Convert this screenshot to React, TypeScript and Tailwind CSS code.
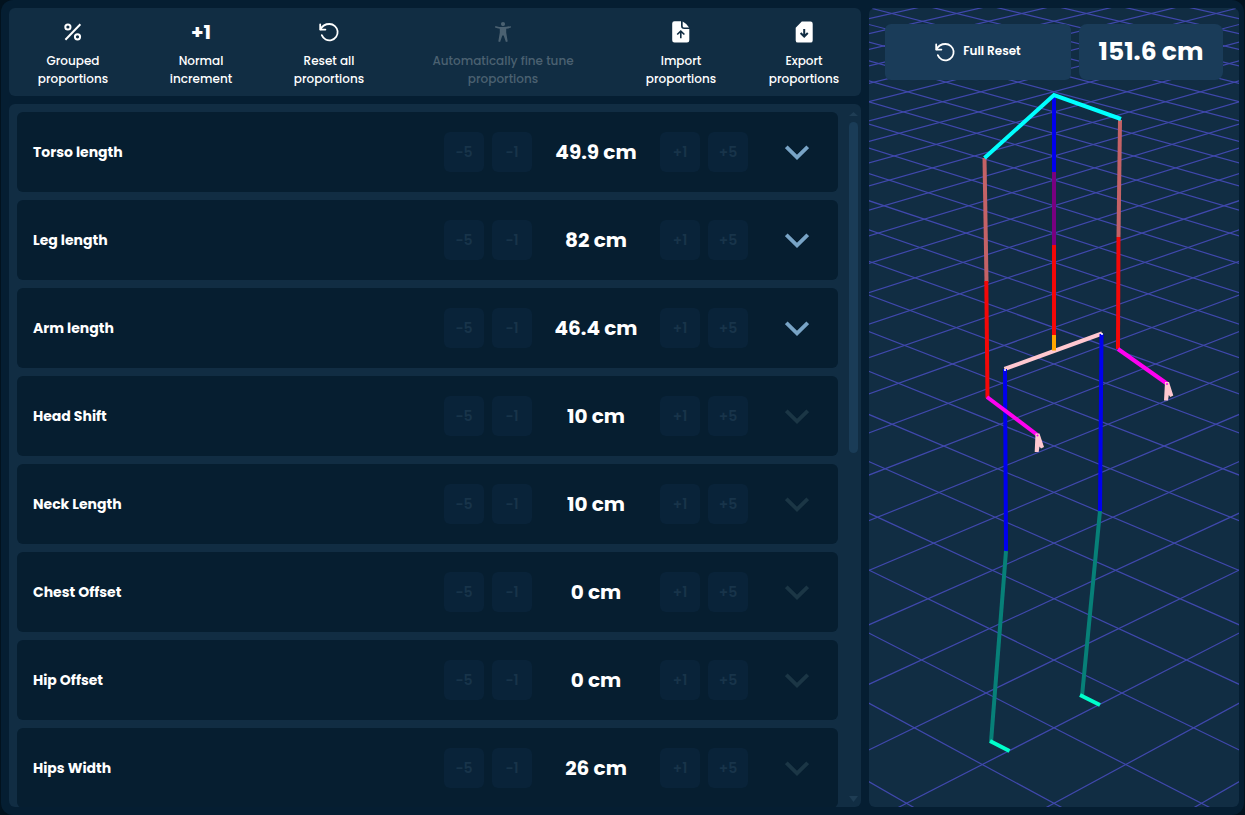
import React from 'react';

type Point = [number, number];

const ROWS = [
  { name: 'Torso length', value: '49.9 cm', group: true },
  { name: 'Leg length', value: '82 cm', group: true },
  { name: 'Arm length', value: '46.4 cm', group: true },
  { name: 'Head Shift', value: '10 cm', group: false },
  { name: 'Neck Length', value: '10 cm', group: false },
  { name: 'Chest Offset', value: '0 cm', group: false },
  { name: 'Hip Offset', value: '0 cm', group: false },
  { name: 'Hips Width', value: '26 cm', group: false },
];

function PercentIcon() {
  return (
    <svg width="18" height="18" viewBox="0 0 18 18" fill="none" stroke="currentColor" strokeWidth="2">
      <circle cx="3.900" cy="4" r="2.600" />
      <circle cx="13.500" cy="13.800" r="2.600" />
      <path d="M16.400 1.200 1.400 16.800" />
    </svg>
  );
}

function ResetIcon() {
  return (
    <svg width="20" height="20" viewBox="0 0 20 20" fill="none" stroke="currentColor" strokeWidth="1.800" strokeLinecap="round" strokeLinejoin="round">
      <path d="M1.200 2.400v5.200h5.200" />
      <path d="M1.600 7.300C3.200 3.900 6.400 2 10.500 2a8.200 8.200 0 1 1-7.700 11.200" />
    </svg>
  );
}

function HumanIcon() {
  return (
    <svg width="16" height="20" viewBox="0 0 16 20" fill="currentColor">
      <circle cx="8" cy="2.100" r="2.100" />
      <path d="M.4 3.900c5 1.600 10.200 1.600 15.200 0l.4 1.700c-1.600.6-3.200 1-4.800 1.200v3.700l1.500 9.100-1.800.4L8.700 13.600H7.300L5.100 20l-1.800-.4 1.500-9.100V6.800C3.200 6.600 1.600 6.200 0 5.600z" />
    </svg>
  );
}

function ImportIcon() {
  return (
    <svg width="18" height="22" viewBox="0 0 18 22">
      <path fill="currentColor" d="M2.500 .3H9v4.500A3.200 3.200 0 0 0 12.200 8H17.300v11.300a2.300 2.300 0 0 1-2.300 2.300H2.500A2.300 2.300 0 0 1 .2 19.300V2.600A2.300 2.300 0 0 1 2.500 .3z" />
      <path fill="currentColor" d="M10.700 .5q3.900 2 6.300 6H12.300a1.600 1.600 0 0 1-1.600-1.600z" />
      <path fill="none" stroke="#112d43" strokeWidth="1.600" d="M8.800 17.300v-7M5.200 13.500l3.600-3.400 3.600 3.400" />
    </svg>
  );
}

function ExportIcon() {
  return (
    <svg width="18" height="22" viewBox="0 0 18 22">
      <path fill="currentColor" d="M6.800 .6H15.500a2.200 2.200 0 0 1 2.200 2.200v16.600a2.200 2.200 0 0 1-2.200 2.200H2.900a2.200 2.200 0 0 1-2.200-2.200V6.700z" />
      <path fill="none" stroke="#112d43" strokeWidth="2" d="M9.200 8v7.500M5.600 12l3.600 3.500 3.600-3.500" />
    </svg>
  );
}

function Tool({ icon, lines, width, dim }: { icon: React.ReactNode; lines: [string, string]; width: string; dim?: boolean }) {
  return (
    <div className={`${width} ${dim ? 'text-[#4b6171]' : 'text-white'} flex flex-col items-center pt-3`}>
      <div className="flex h-6 items-center justify-center">{icon}</div>
      <div className="mt-2 text-center text-[12px] leading-[18px] font-medium">
        <div>{lines[0]}</div>
        <div>{lines[1]}</div>
      </div>
    </div>
  );
}

function Step({ label }: { label: string }) {
  return (
    <div className="flex h-10 w-10 items-center justify-center rounded-md bg-[#092339] text-[14px] font-semibold text-[#18344a]">
      {label}
    </div>
  );
}

function Row({ name, value, group }: { name: string; value: string; group: boolean }) {
  return (
    <div className="flex h-20 shrink-0 items-center rounded-md bg-[#061e30]">
      <div className="w-[427px] pl-4 text-[14px] font-bold text-white">{name}</div>
      <div className="flex gap-2">
        <Step label="-5" />
        <Step label="-1" />
      </div>
      <div className="w-32 text-center text-[20px] font-bold whitespace-nowrap text-white">{value}</div>
      <div className="flex gap-2">
        <Step label="+1" />
        <Step label="+5" />
      </div>
      <svg className={`ml-[37px] ${group ? 'text-[#78a4c6]' : 'text-[#1b3645]'}`} width="24" height="16" viewBox="0 0 24 16" fill="none" stroke="currentColor" strokeWidth="3.800">
        <path d="M1.300 2.800 12 13.300 22.700 2.800" />
      </svg>
    </div>
  );
}

/* Ground plane in one-point perspective; depth grows towards the horizon. */
function project(depth: number, lateral: number): Point {
  const s = 1 + 0.05651 * depth;
  return [185 + (147.5 * lateral) / s, -615.7 + 1411 / s];
}

const GRID = Array.from({ length: 36 }, (_, n) => n - 5).flatMap((i) =>
  [1, -1].map((side) => {
    const a = project(-2, side * (i + 2));
    const b = project(27, side * (i - 27));
    return { key: `${i}:${side}`, a, b };
  }),
);

const BONES: { c: string; p: string }[] = [
  { c: '#0000ee', p: 'M185 88V165' },
  { c: '#780080', p: 'M185 164V238' },
  { c: '#f40808', p: 'M185 237V328' },
  { c: '#c46266', p: 'M115.500 150L117.500 274' },
  { c: '#c46266', p: 'M251 112L249.500 229' },
  { c: '#f40808', p: 'M117.300 273L118.500 390' },
  { c: '#f40808', p: 'M249.500 229L249 341' },
  { c: '#00ffff', p: 'M115.500 150L185 87L252 111' },
  { c: '#ffc8d0', p: 'M135.500 361L233 325.500' },
  { c: '#ffa500', p: 'M185 327V342.500' },
  { c: '#0000ee', p: 'M136 361L137 543' },
  { c: '#0000ee', p: 'M232.500 326L231 504' },
  { c: '#078078', p: 'M137 543L122 734' },
  { c: '#078078', p: 'M231 503L213 688' },
  { c: '#00ffcc', p: 'M121 733L140.500 743' },
  { c: '#00ffcc', p: 'M211 687L231 697' },
  { c: '#ff00f0', p: 'M118 389L168.500 427' },
  { c: '#ff00f0', p: 'M249 341L298.500 376' },
];

function Skeleton() {
  return (
    <svg className="absolute inset-0" width="370" height="799" viewBox="0 0 370 799" fill="none">
      <g stroke="#4048ad" strokeWidth="1.200">
        {GRID.map(({ key, a, b }) => (
          <line key={key} x1={a[0]} y1={a[1]} x2={b[0]} y2={b[1]} />
        ))}
      </g>
      {BONES.map((b) => (
        <path key={b.p} d={b.p} stroke={b.c} strokeWidth="4" />
      ))}
      <g fill="#ffc8d0">
        <path d="M166.500 425.500h4L175 439l-3 1.500-1.500-2-.8 5.500h-4z" />
        <path d="M296 374h4l4.300 13.500-3 1.500-1.500-2-.8 5.500h-4z" />
      </g>
      <g fill="#ffffff">
        <circle cx="136" cy="362" r="1" />
        <circle cx="233" cy="326" r="1" />
      </g>
      <g fill="#ff00f0">
        <circle cx="168.500" cy="427.500" r="1" />
        <circle cx="298" cy="376" r="1" />
      </g>
    </svg>
  );
}

export default function App() {
  return (
    <div className="h-[815px] w-[1245px] overflow-hidden bg-[#02121e] pr-px pl-px font-['Poppins','Inter',sans-serif] select-none">
      <div className="flex h-[815px] gap-2 rounded-xl bg-[#051e32] pt-2 pr-[5px] pb-2 pl-2">
        <div className="flex w-[852px] flex-col gap-2">
          <div className="flex h-[88px] shrink-0 rounded-md bg-[#112d43]">
            <Tool width="w-32" icon={<PercentIcon />} lines={['Grouped', 'proportions']} />
            <Tool width="w-32" icon={<span className="text-[20px] font-bold">+1</span>} lines={['Normal', 'increment']} />
            <Tool width="w-32" icon={<ResetIcon />} lines={['Reset all', 'proportions']} />
            <Tool width="w-[220px]" icon={<HumanIcon />} lines={['Automatically fine tune', 'proportions']} dim />
            <Tool width="w-[136px]" icon={<ImportIcon />} lines={['Import', 'proportions']} />
            <Tool width="w-[110px]" icon={<ExportIcon />} lines={['Export', 'proportions']} />
          </div>
          <div className="flex h-[703px] overflow-hidden rounded-md bg-[#112d43] pt-2 pl-2">
            <div className="flex w-[821px] flex-col gap-2">
              {ROWS.map((r) => (
                <Row key={r.name} name={r.name} value={r.value} group={r.group} />
              ))}
            </div>
            <div className="ml-[11px] flex h-[695px] w-[9px] flex-col items-center">
              <svg width="9" height="10" viewBox="0 0 9 10" fill="#1f3d54"><path d="M4.500 0 9 4H0z" /></svg>
              <div className="h-[331px] w-[9px] rounded-full bg-[#1a3c57]" />
              <svg className="mt-auto mb-1" width="9" height="7" viewBox="0 0 9 7" fill="#1f3d54"><path d="M0 0h9L4.500 6z" /></svg>
            </div>
          </div>
        </div>
        <div className="relative h-[799px] w-[370px] overflow-hidden rounded-md bg-[#112d43]">
          <Skeleton />
          <div className="relative flex gap-2 p-4">
            <div className="flex h-14 w-[186px] items-center justify-center gap-2 rounded-md bg-[#1a3c59] text-white">
              <ResetIcon />
              <span className="-mt-0.5 text-[12px] font-semibold">Full Reset</span>
            </div>
            <div className="flex h-14 w-36 items-center justify-center rounded-lg bg-[#1a3c59] text-[25px] font-bold whitespace-nowrap text-white">
              151.6 cm
            </div>
          </div>
        </div>
      </div>
    </div>
  );
}
